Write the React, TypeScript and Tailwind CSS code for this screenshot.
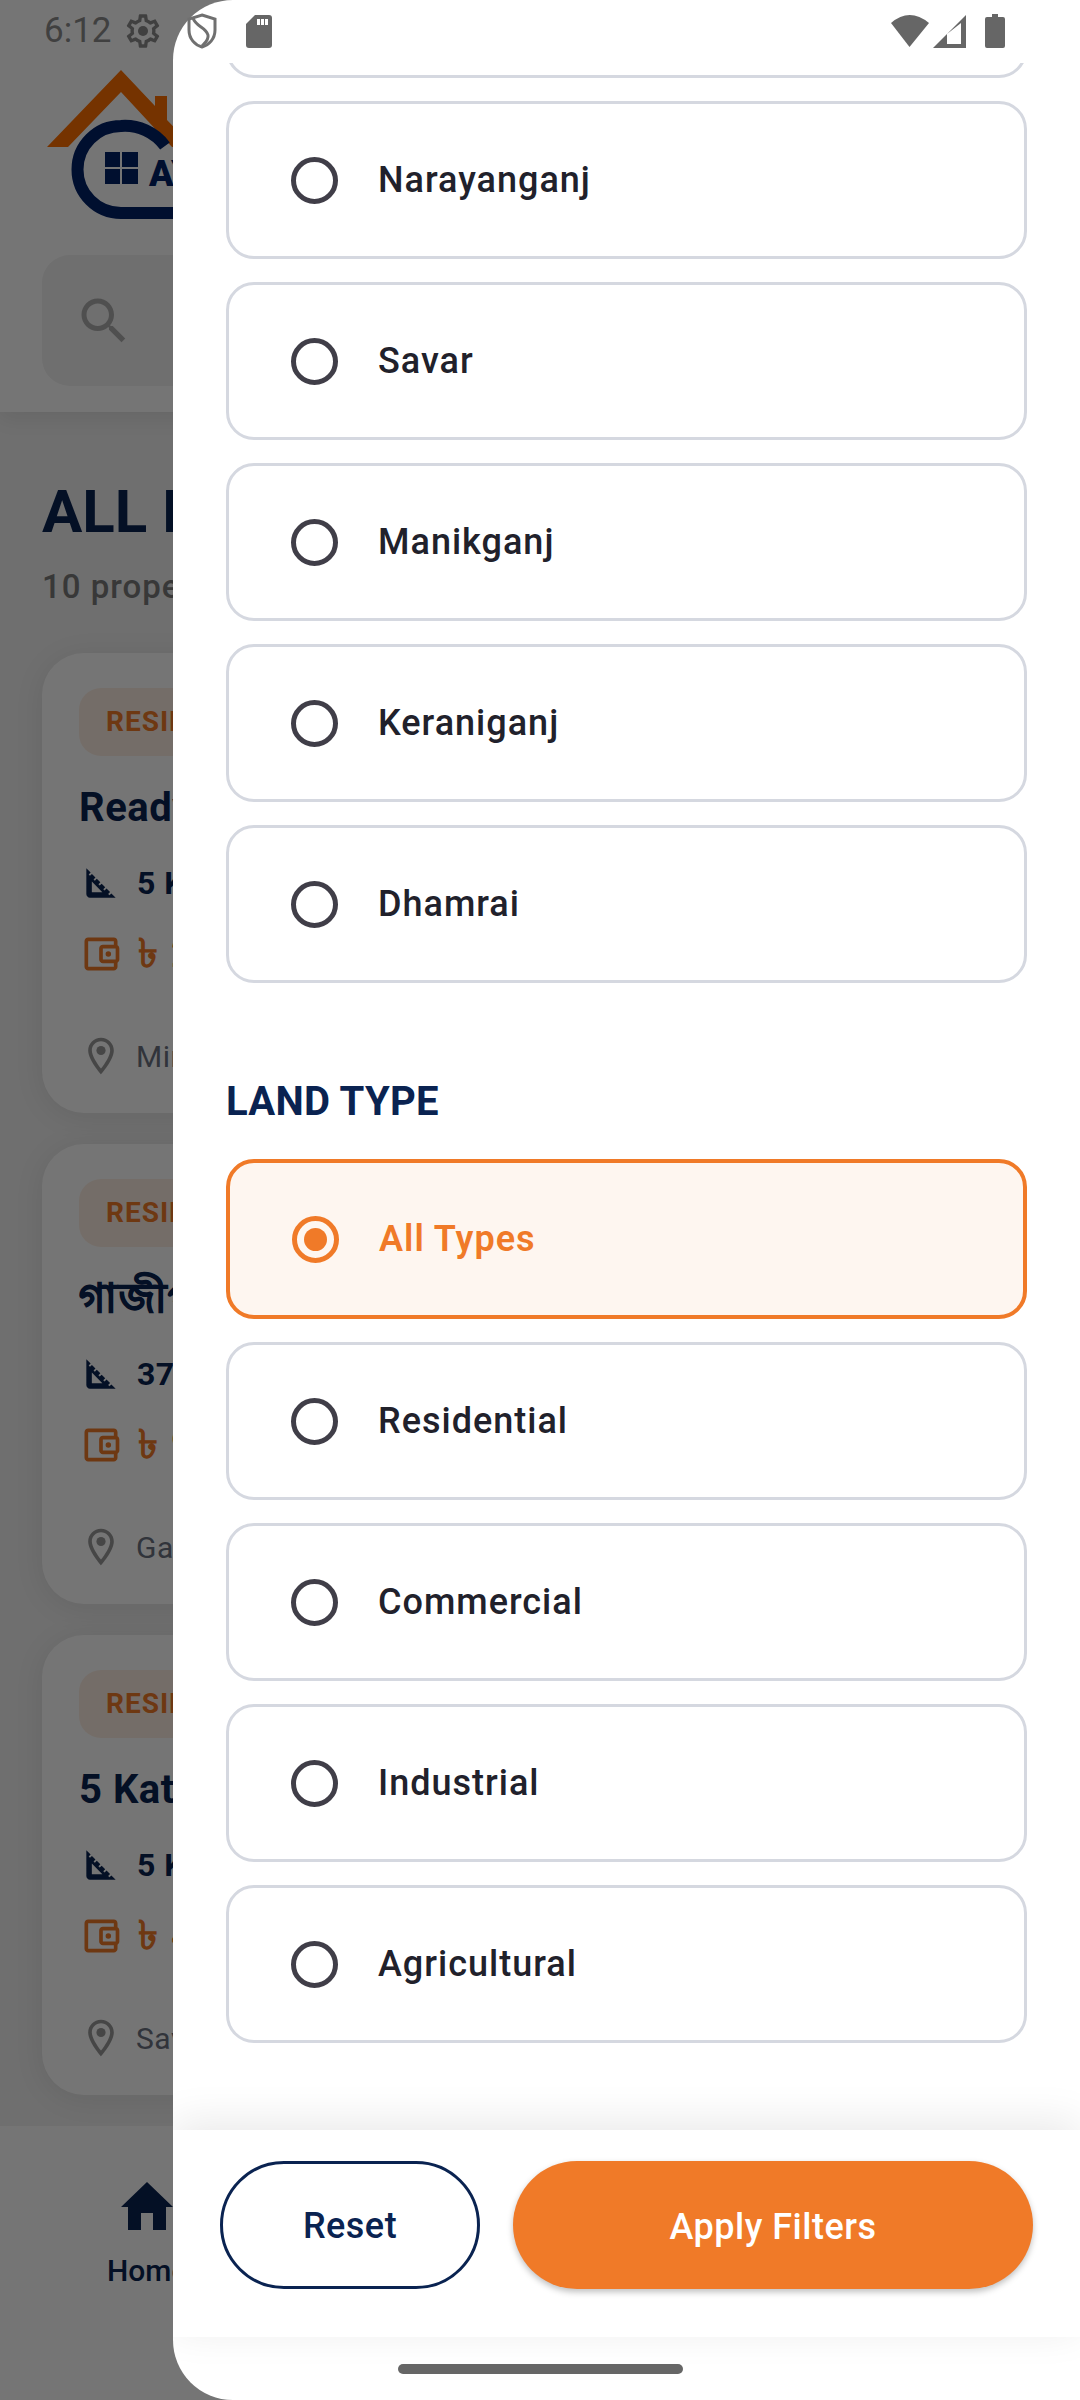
const locations = ['Narayanganj', 'Savar', 'Manikganj', 'Keraniganj', 'Dhamrai'];
const landTypes = ['All Types', 'Residential', 'Commercial', 'Industrial', 'Agricultural'];

const cards = [
  { title: 'Ready Plot', titleClass: '', size: '5 Katha', price: '৳ 25 Lakh', place: 'Mirpur, Dhaka' },
  { title: 'গাজীপুর প্লট', titleClass: 'tracking-[2px] [-webkit-text-stroke:1.2px_#0a2351]', size: '37 Katha', price: '৳ 90 Lakh', place: 'Gazipur' },
  { title: '5 Katha Plot', titleClass: '', size: '5 Katha', price: '৳ 40 Lakh', place: 'Savar, Dhaka' },
];

function Option({ label, selected }: { label: string; selected?: boolean }) {
  return (
    <div
      className={`flex items-center rounded-[28px] ${
        selected ? 'h-[160px] border-[4px] border-[#f07a28] bg-[#fef6f0] pl-[62px]' : 'h-[158px] border-[3px] border-[#d5d8e0] bg-white pl-[62px]'
      }`}
    >
      <span
        className={`flex h-[47px] w-[47px] shrink-0 items-center justify-center rounded-full border-[5px] ${
          selected ? 'border-[#f07a28]' : 'border-[#403e48]'
        }`}
      >
        {selected && <span className="h-[23px] w-[23px] rounded-full bg-[#f07a28]" />}
      </span>
      <span
        className={`ml-[40px] text-[36px] tracking-[1px] ${
          selected ? 'font-semibold text-[#f07a28]' : 'font-medium text-[#21212b]'
        }`}
      >
        {label}
      </span>
    </div>
  );
}

function PropertyCard({ title, titleClass, size, price, place }: (typeof cards)[number]) {
  return (
    <div className="h-[460px] w-[1000px] rounded-[42px] bg-white pt-[35px] pl-[37px] shadow-[0_4px_30px_rgba(0,0,0,0.08)]">
      <div className="flex h-[68px] w-[300px] items-center rounded-[22px] bg-[#fdeee3] pl-[27px] text-[28px] font-bold tracking-[1px] text-[#f07a28]">
        RESIDENTIAL
      </div>
      <div className={`mt-[28px] text-[40px] leading-[48px] font-bold tracking-[0.5px] text-[#0a2351] ${titleClass}`}>{title}</div>
      <div className="mt-[29px] flex h-[44px] items-center text-[32px] font-bold tracking-[0.5px] text-[#0a2351]">
        <svg width="44" height="44" viewBox="0 0 24 24" className="mr-[14px]" fill="#0a2351">
          <path d="M17.66 17.66l-1.06 1.06-.71-.71 1.06-1.06-1.94-1.94-1.06 1.06-.71-.71 1.06-1.06-1.94-1.94-1.06 1.06-.71-.71 1.06-1.06L9.7 9.7l-1.06 1.06-.71-.71 1.06-1.06-1.94-1.94-1.06 1.06-.71-.71 1.06-1.06L4 4v14c0 1.1.9 2 2 2h14l-2.34-2.34zM7 17v-5.76L12.76 17H7z" />
        </svg>
        {size}
      </div>
      <div className="mt-[27px] flex h-[44px] items-center text-[40px] font-bold tracking-[1.5px] text-[#f07a28]">
        <svg width="44" height="44" viewBox="0 0 24 24" className="mr-[15px]" fill="#f07a28">
          <path d="M21 7.28V5c0-1.1-.9-2-2-2H5c-1.11 0-2 .9-2 2v14c0 1.1.89 2 2 2h14c1.1 0 2-.9 2-2v-2.28c.59-.35 1-.98 1-1.72V9c0-.74-.41-1.37-1-1.72zM20 9v6h-7V9h7zM5 19V5h14v2h-6c-1.1 0-2 .9-2 2v6c0 1.1.9 2 2 2h6v2H5z" />
          <circle cx="16" cy="12" r="1.5" />
        </svg>
        {price}
      </div>
      <div className="mt-[58px] flex h-[44px] items-center text-[30px] tracking-[0.5px] text-[#6b7280]">
        <svg width="44" height="44" viewBox="0 0 24 24" className="mr-[13px]" fill="#9a9a9a">
          <path d="M12 2C8.13 2 5 5.13 5 9c0 5.25 7 13 7 13s7-7.75 7-13c0-3.87-3.13-7-7-7zM7 9c0-2.76 2.24-5 5-5s5 2.24 5 5c0 2.88-2.88 7.19-5 9.88C9.92 16.21 7 11.85 7 9z" />
          <circle cx="12" cy="9" r="2.5" />
        </svg>
        {place}
      </div>
    </div>
  );
}

function StatusBar() {
  return (
    <div className="absolute top-0 right-0 left-0 flex h-[62px] items-center pr-[75px] pl-[44px]">
      <span className="text-[35px] text-[#404040]">6:12</span>
      <svg width="40" height="40" viewBox="0 0 24 24" className="ml-[11px]" fill="#404040">
        <path
          fillRule="evenodd"
          d="M19.43 12.98c.04-.32.07-.64.07-.98s-.03-.66-.07-.98l2.11-1.65c.19-.15.24-.42.12-.64l-2-3.46c-.12-.22-.39-.3-.61-.22l-2.49 1c-.52-.4-1.08-.73-1.69-.98l-.38-2.65C14.46 2.18 14.25 2 14 2h-4c-.25 0-.46.18-.49.42l-.38 2.65c-.61.25-1.17.59-1.69.98l-2.49-1c-.23-.08-.49 0-.61.22l-2 3.46c-.13.22-.07.49.12.64l2.11 1.65c-.04.32-.07.65-.07.98s.03.66.07.98l-2.11 1.65c-.19.15-.24.42-.12.64l2 3.46c.12.22.39.3.61.22l2.49-1c.52.4 1.08.73 1.69.98l.38 2.65c.03.24.24.42.49.42h4c.25 0 .46-.18.49-.42l.38-2.65c.61-.25 1.17-.59 1.69-.98l2.49 1c.23.08.49 0 .61-.22l2-3.46c.12-.22.07-.49-.12-.64l-2.11-1.65zM17.45 11.27c.04.31.05.52.05.73s-.02.43-.05.73l-.14 1.13.89.7 1.08.84-.7 1.21-1.27-.51-1.04-.42-.9.68c-.43.32-.84.56-1.25.73l-1.06.43-.16 1.13-.2 1.35h-1.4l-.19-1.35-.16-1.13-1.06-.43c-.43-.18-.83-.41-1.23-.71l-.91-.7-1.06.43-1.27.51-.7-1.21 1.08-.84.89-.7-.14-1.13c-.03-.31-.05-.54-.05-.74s.02-.43.05-.73l.14-1.13-.89-.7-1.08-.84.7-1.21 1.27.51 1.04.42.9-.68c.43-.32.84-.56 1.25-.73l1.06-.43.16-1.13.2-1.35h1.39l.19 1.35.16 1.13 1.06.43c.43.18.83.41 1.23.71l.91.7 1.06-.43 1.27-.51.7 1.21-1.07.85-.89.7.14 1.13z"
        />
        <circle cx="12" cy="12" r="3" />
      </svg>
      <svg width="30" height="36" viewBox="0 0 30 36" className="ml-[24px]" fill="none" stroke="#707070" strokeWidth="3">
        <path d="M15 2 L28 6 V17 C28 26 22 32 15 34 C8 32 2 26 2 17 V6 Z" />
        <path d="M6 5 C9 14 19 14 21 22 C22 27 18 30 15 33" />
      </svg>
      <svg width="26" height="33" viewBox="0 0 26 33" className="ml-[29px]" fill="#666666">
        <path d="M9 0 H23 a3 3 0 0 1 3 3 V30 a3 3 0 0 1-3 3 H3 a3 3 0 0 1-3-3 V9 Z" />
        <path d="M11 4 h3 v6 h-3z M15 4 h3 v6 h-3z M19 4 h3 v6 h-3z" fill="#ffffff" />
      </svg>
      <svg width="40" height="34" viewBox="0 0 40 34" className="ml-auto" fill="#666666">
        <path d="M1 9 Q19.5 -7 39 9 L19.5 33 Z" />
      </svg>
      <svg width="33" height="33" viewBox="0 0 33 33" className="ml-[3px]" fill="#666666">
        <path fillRule="evenodd" d="M33 0 V33 H0 Z M14 29 H28 V8 L14 19 Z" />
      </svg>
      <svg width="20" height="34" viewBox="0 0 20 34" className="ml-[19px]" fill="#666666">
        <path d="M7 0 h6 v3 h5 a2 2 0 0 1 2 2 v27 a2 2 0 0 1 -2 2 H2 a2 2 0 0 1 -2-2 V5 a2 2 0 0 1 2-2 h5 z" />
      </svg>
    </div>
  );
}

export default function App() {
  return (
    <div className="relative h-[2400px] w-[1080px] overflow-hidden bg-[#f1f1f1] font-['Roboto',sans-serif]">
      {/* page behind the drawer */}
      <div className="h-[412px] bg-white pt-[63px] pl-[42px] shadow-[0_6px_20px_rgba(0,0,0,0.08)]">
        <svg width="200" height="160" viewBox="42 63 200 160">
          <path d="M47 147 L121 70 L155 106 V96 H167 V120 L193 147 H172 L121 92 L68 147 Z" fill="#ff7000" />
          <path d="M165 146 A50 50 0 0 0 121 126 A43.5 43.5 0 0 0 121 213 H260" fill="none" stroke="#002168" strokeWidth="12" />
          <path d="M105 152 h15 v15 h-15z M122 152 h16 v15 h-16z M105 169 h15 v15 h-15z M122 169 h16 v15 h-16z" fill="#002168" />
          <text x="149" y="186" fontSize="36" fontWeight="900" fontFamily="Roboto" fill="#002168">
            AY
          </text>
        </svg>
        <div className="mt-[32px] flex h-[131px] w-[900px] items-center rounded-[28px] bg-[#f1f1f1] pl-[32px]">
          <svg width="60" height="60" viewBox="0 0 24 24" fill="#adadad">
            <path d="M15.5 14h-.79l-.28-.27C15.41 12.59 16 11.11 16 9.5 16 5.91 13.09 3 9.5 3S3 5.91 3 9.5 5.91 16 9.5 16c1.61 0 3.09-.59 4.23-1.57l.27.28v.79l5 4.99L20.49 19l-4.99-5zm-6 0C7.01 14 5 11.99 5 9.5S7.01 5 9.5 5 14 7.01 14 9.5 11.99 14 9.5 14z" />
          </svg>
        </div>
      </div>
      <div className="px-[42px]">
        <div className="mt-[68px] text-[60px] leading-[64px] font-bold text-[#0a2351]">ALL PROPERTIES</div>
        <div className="mt-[23px] text-[33px] leading-[40px] font-medium tracking-[1px] text-[#7a7a7a]">10 properties found</div>
        <div className="mt-[46px] flex flex-col gap-[31px]">
          {cards.map((card) => (
            <PropertyCard key={card.title} {...card} />
          ))}
        </div>
      </div>
      <div className="absolute right-0 bottom-0 left-0 h-[274px] bg-white pt-[56px] pl-[107px]">
        <svg width="52" height="48" viewBox="0 0 52 48" fill="#0a2351" className="ml-[14px]">
          <path d="M26 0 L52 25 H45 V48 H32 V31 H20 V48 H7 V25 H0 Z" />
        </svg>
        <div className="mt-[18px] text-[30px] font-medium text-[#0a2351]">Home</div>
      </div>

      {/* scrim */}
      <div className="absolute inset-0 bg-black/54" />

      {/* filter drawer */}
      <div className="absolute top-0 right-0 bottom-0 flex w-[907px] flex-col overflow-hidden rounded-l-[60px] bg-white">
        <div className="h-[63px] shrink-0" />
        <div className="h-[2067px] shrink-0 overflow-hidden px-[53px]">
          <div className="-mt-[143px] flex flex-col gap-[23px]">
            <div className="h-[158px] rounded-[28px] border-[3px] border-[#d5d8e0]" />
            {locations.map((name) => (
              <Option key={name} label={name} />
            ))}
          </div>
          <h3 className="mt-[95px] text-[40px] leading-[48px] font-bold tracking-[0.3px] text-[#0a2351]">LAND TYPE</h3>
          <div className="mt-[33px] flex flex-col gap-[23px]">
            {landTypes.map((name, i) => (
              <Option key={name} label={name} selected={i === 0} />
            ))}
          </div>
        </div>
        <div className="relative flex h-[207px] shrink-0 items-start gap-[33px] bg-white px-[47px] pt-[31px] shadow-[0_-8px_40px_rgba(0,0,0,0.09)]">
          <button className="h-[128px] w-[260px] rounded-full border-[3px] border-[#0a2351] pt-[2px] text-[36px] font-medium tracking-[0.5px] text-[#0a2351]">
            Reset
          </button>
          <button className="h-[128px] flex-1 rounded-full bg-[#f07a28] pt-[3px] text-[36px] font-medium tracking-[0.5px] text-white shadow-[0_3px_6px_rgba(0,0,0,0.25)]">
            Apply Filters
          </button>
        </div>
        <div className="flex-1 pt-[27px] pl-[225px]">
          <div className="h-[10px] w-[285px] rounded-full bg-[#666666]" />
        </div>
      </div>

      <StatusBar />
    </div>
  );
}
